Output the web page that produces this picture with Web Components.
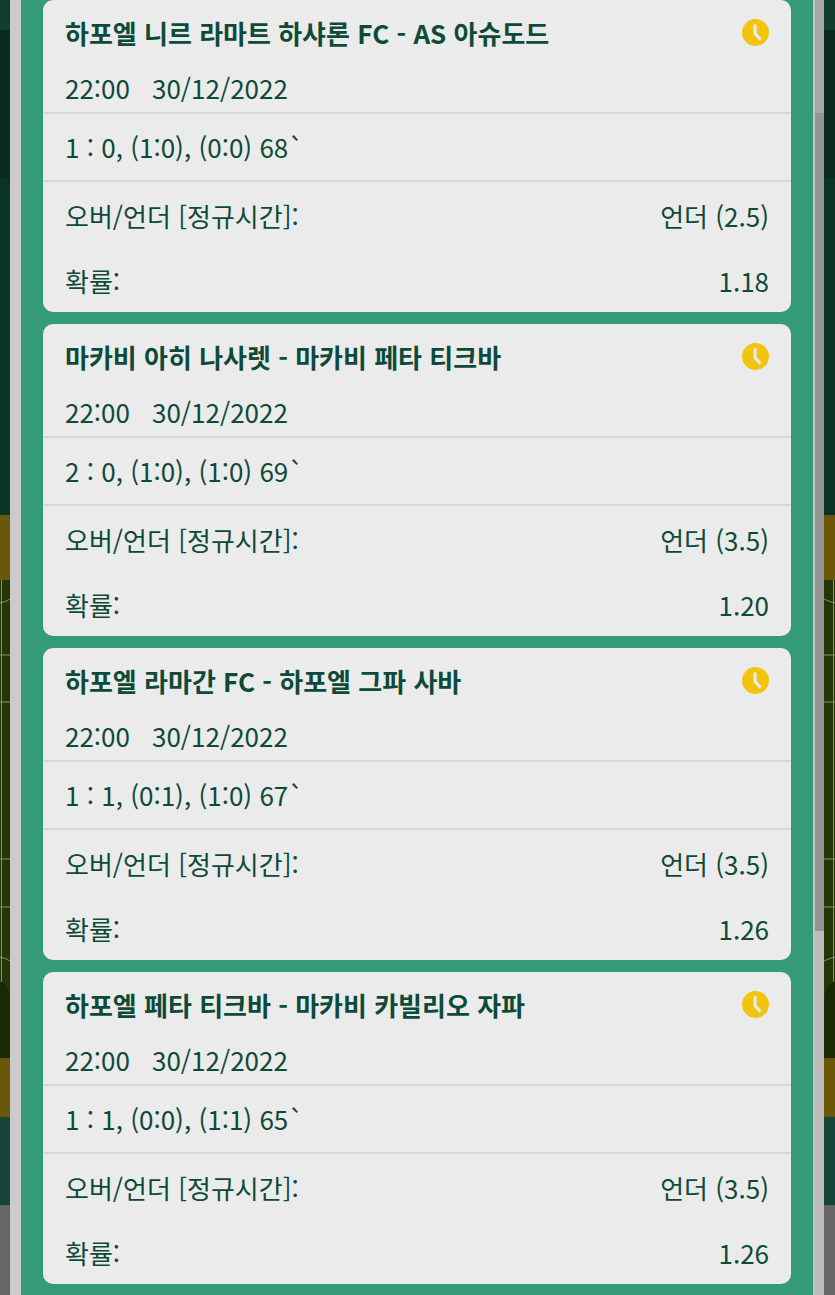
<!DOCTYPE html>
<html lang="ko">
<head>
<meta charset="utf-8">
<title>경기 목록</title>
<style>
  html, body { margin: 0; height: 100%; overflow: hidden; background: #0b2f24; }
</style>
</head>
<body>
<page-backdrop></page-backdrop>
<modal-panel>
  <match-card title-text="하포엘 니르 라마트 하샤론 FC - AS 아슈도드" score="1 : 0, (1:0), (0:0) 68`" pick="언더 (2.5)" odds="1.18"></match-card>
  <match-card title-text="마카비 아히 나사렛 - 마카비 페타 티크바" score="2 : 0, (1:0), (1:0) 69`" pick="언더 (3.5)" odds="1.20"></match-card>
  <match-card title-text="하포엘 라마간 FC - 하포엘 그파 사바" score="1 : 1, (0:1), (1:0) 67`" pick="언더 (3.5)" odds="1.26"></match-card>
  <match-card title-text="하포엘 페타 티크바 - 마카비 카빌리오 자파" score="1 : 1, (0:0), (1:1) 65`" pick="언더 (3.5)" odds="1.26"></match-card>
</modal-panel>

<script>
const backdropTemplate = document.createElement("template");
backdropTemplate.innerHTML = `
  <style>
    :host {
      position: absolute;
      inset: 0;
      display: flex;
      flex-direction: column;
      overflow: hidden;
    }
    .band { flex: none; }
    .top { height: 30px; background: #0f3d2e; }
    .dark { height: 148px; background: #0a2a20; }
    .mid { height: 337px; background: #0b3427; }
    .gold { height: 65px; background: #6b5708; }
    .gold.low { height: 59px; }
    .field { height: 478px; display: block; }
    .foot { height: 88px; background: #16463a; }
    .rest { flex: 1; background: #666; }
  </style>
  <div class="band top"></div>
  <div class="band dark"></div>
  <div class="band mid"></div>
  <div class="band gold"></div>
  <svg class="band field" viewBox="0 0 835 478" width="835" height="478">
    <rect width="835" height="478" fill="#243606"/>
    <path d="M0 402 L1 402 Q10 402 10 430 L10 478 L0 478Z M835 402 Q824 402 824 430 L824 478 L835 478Z" fill="#1a2904"/>
    <g fill="none" stroke="#8a9080" stroke-width="1">
      <path d="M1.5 0V402M833.5 0V402"/>
      <path d="M0 75H10M0 122H10M0 279H10M0 327H10M824 75H835M824 122H835M824 279H835M824 327H835"/>
      <path d="M0 23Q6 22 10 19M824 19Q830 22 835 23M0 377Q6 378 10 381M824 381Q830 378 835 377"/>
    </g>
  </svg>
  <div class="band gold low"></div>
  <div class="band foot"></div>
  <div class="band rest"></div>
`;

class PageBackdrop extends HTMLElement {
  constructor() {
    super();
    this.attachShadow({ mode: "open" });
    this.shadowRoot.appendChild(backdropTemplate.content.cloneNode(true));
  }
}

const panelTemplate = document.createElement("template");
panelTemplate.innerHTML = `
  <style>
    :host {
      position: absolute;
      top: 0;
      bottom: 0;
      left: 10px;
      right: 11px;
      display: grid;
      grid-template-columns: 11px 1fr 11px;
      overflow: hidden;
    }
    .edge-left { background: #cbcbcb; }
    .body {
      background: #359a78;
      padding: 0 22px;
      display: flex;
      flex-direction: column;
      gap: 12px;
      min-width: 0;
    }
    .edge-right {
      display: grid;
      grid-template-columns: 2px 1fr;
      background: #c6c6c6;
    }
    .edge-right .line { background: #c4c4c4; }
    .track { display: flex; flex-direction: column; }
    .track .a { height: 113px; background: #a8a8a8; }
    .track .b { height: 818px; background: #939393; }
    .track .c { flex: 1; background: #bdbdbd; }
  </style>
  <div class="edge-left"></div>
  <div class="body"><slot></slot></div>
  <div class="edge-right">
    <div class="line"></div>
    <div class="track"><div class="a"></div><div class="b"></div><div class="c"></div></div>
  </div>
`;

class ModalPanel extends HTMLElement {
  constructor() {
    super();
    this.attachShadow({ mode: "open" });
    this.shadowRoot.appendChild(panelTemplate.content.cloneNode(true));
  }
}

const cardTemplate = document.createElement("template");
cardTemplate.innerHTML = `
  <style>
    :host {
      display: block;
      flex: none;
      height: 312px;
      box-sizing: border-box;
      background: #ebebeb;
      border-radius: 10px;
      color: #0e4a38;
      font: 400 26px/36px "Noto Sans CJK KR", "Noto Sans", sans-serif;
      overflow: hidden;
    }
    .head {
      height: 114px;
      box-sizing: border-box;
      padding: 15px 22px 0;
      border-bottom: 2px solid #d6d6d6;
      display: grid;
      grid-template-columns: 1fr auto;
      row-gap: 12px;
    }
    .title { font-weight: 700; }
    clock-badge { margin-top: 4px; }
    .when { display: flex; gap: 22px; grid-column: 1 / -1; }
    .score {
      height: 68px;
      box-sizing: border-box;
      padding: 0 22px;
      border-bottom: 2px solid #d6d6d6;
      display: flex;
      align-items: center;
    }
    .rows { display: flex; flex-direction: column; padding: 16px 22px 0; gap: 29px; }
    .row { display: flex; justify-content: space-between; }
  </style>
  <div class="head">
    <div class="title"></div>
    <clock-badge></clock-badge>
    <div class="when"><span>22:00</span><span>30/12/2022</span></div>
  </div>
  <div class="score"></div>
  <div class="rows">
    <div class="row"><span>오버/언더 [정규시간]:</span><span class="pick"></span></div>
    <div class="row"><span>확률:</span><span class="odds"></span></div>
  </div>
`;

class MatchCard extends HTMLElement {
  constructor() {
    super();
    this.attachShadow({ mode: "open" });
    this.shadowRoot.appendChild(cardTemplate.content.cloneNode(true));
  }

  connectedCallback() {
    const root = this.shadowRoot;
    root.querySelector(".title").textContent = this.getAttribute("title-text");
    root.querySelector(".score").textContent = this.getAttribute("score");
    root.querySelector(".pick").textContent = this.getAttribute("pick");
    root.querySelector(".odds").textContent = this.getAttribute("odds");
  }
}

const clockTemplate = document.createElement("template");
clockTemplate.innerHTML = `
  <style>
    :host { display: block; width: 27px; height: 27px; }
    svg { display: block; }
  </style>
  <svg viewBox="0 0 27 27" width="27" height="27">
    <circle cx="13.5" cy="13.5" r="13.5" fill="#f1c40f"/>
    <path d="M13 6.5V14.5L17.5 19.5" fill="none" stroke="#ebebeb" stroke-width="3.2" stroke-linecap="round" stroke-linejoin="round"/>
  </svg>
`;

class ClockBadge extends HTMLElement {
  constructor() {
    super();
    this.attachShadow({ mode: "open" });
    this.shadowRoot.appendChild(clockTemplate.content.cloneNode(true));
  }
}

customElements.define("page-backdrop", PageBackdrop);
customElements.define("modal-panel", ModalPanel);
customElements.define("match-card", MatchCard);
customElements.define("clock-badge", ClockBadge);
</script>
</body>
</html>
